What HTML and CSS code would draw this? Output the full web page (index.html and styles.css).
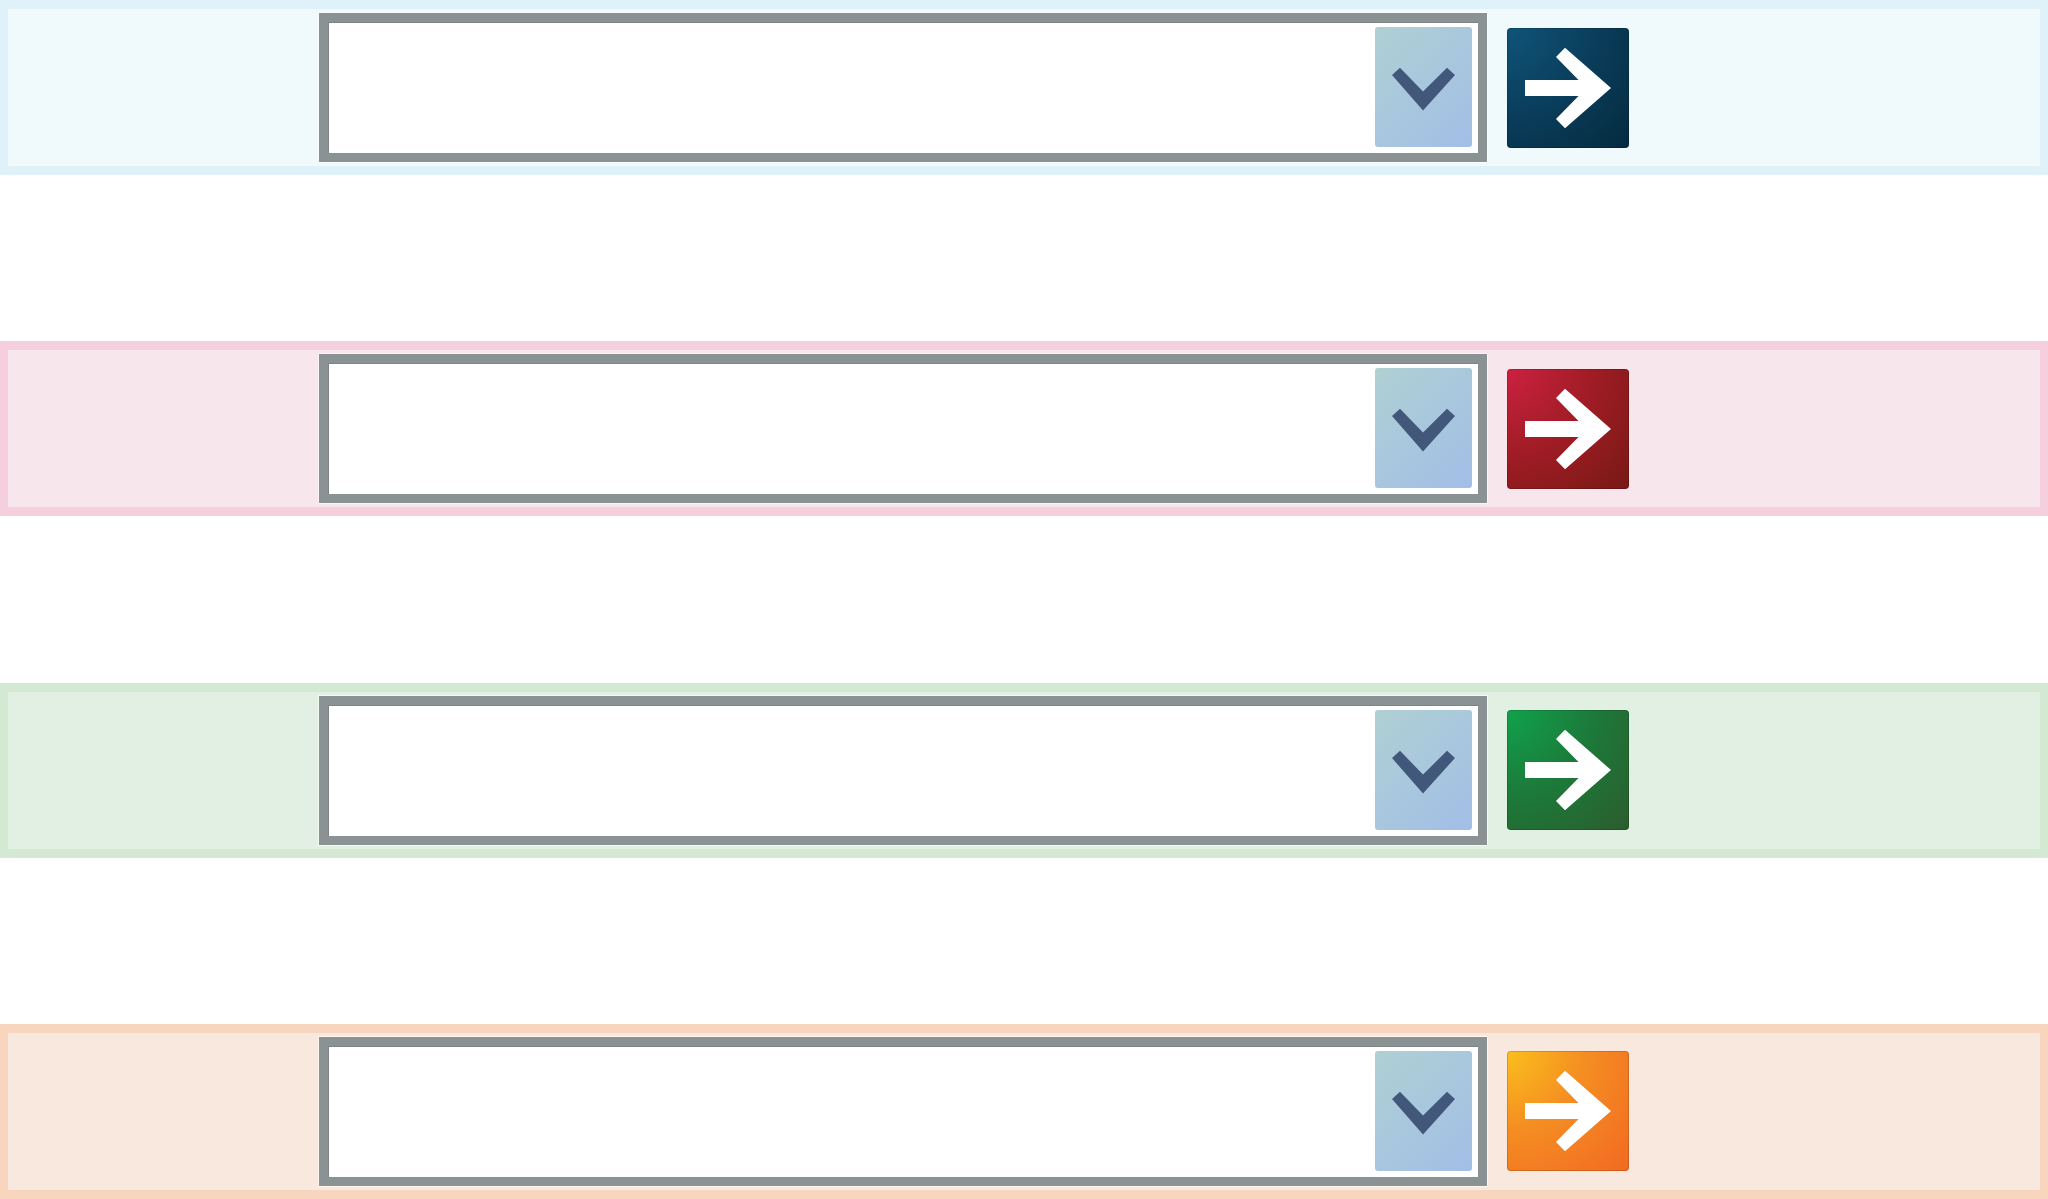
FILE: index.html
```html
<!DOCTYPE html>
<html lang="en">
<head>
    <meta charset="UTF-8">
    <title>Selectors</title>
    <link rel="stylesheet" href="styles.css">
</head>
<body>
    <div class="row row-blue">
        <div class="select">
            <div class="select-btn">
                <svg viewBox="0 0 97 120" width="97" height="120"><polygon points="17,48 25,40.8 48,64.5 72,40.8 80,48 48,83.5"/></svg>
            </div>
        </div>
        <div class="go-btn">
            <svg viewBox="0 0 122 120" width="122" height="120"><polygon points="18,52 71.5,52 49,29 58,19.7 104,60 58,100.3 49,91 71.5,68 18,68"/></svg>
        </div>
    </div>

    <div class="row row-red">
        <div class="select">
            <div class="select-btn">
                <svg viewBox="0 0 97 120" width="97" height="120"><polygon points="17,48 25,40.8 48,64.5 72,40.8 80,48 48,83.5"/></svg>
            </div>
        </div>
        <div class="go-btn">
            <svg viewBox="0 0 122 120" width="122" height="120"><polygon points="18,52 71.5,52 49,29 58,19.7 104,60 58,100.3 49,91 71.5,68 18,68"/></svg>
        </div>
    </div>

    <div class="row row-green">
        <div class="select">
            <div class="select-btn">
                <svg viewBox="0 0 97 120" width="97" height="120"><polygon points="17,48 25,40.8 48,64.5 72,40.8 80,48 48,83.5"/></svg>
            </div>
        </div>
        <div class="go-btn">
            <svg viewBox="0 0 122 120" width="122" height="120"><polygon points="18,52 71.5,52 49,29 58,19.7 104,60 58,100.3 49,91 71.5,68 18,68"/></svg>
        </div>
    </div>

    <div class="row row-orange">
        <div class="select">
            <div class="select-btn">
                <svg viewBox="0 0 97 120" width="97" height="120"><polygon points="17,48 25,40.8 48,64.5 72,40.8 80,48 48,83.5"/></svg>
            </div>
        </div>
        <div class="go-btn">
            <svg viewBox="0 0 122 120" width="122" height="120"><polygon points="18,52 71.5,52 49,29 58,19.7 104,60 58,100.3 49,91 71.5,68 18,68"/></svg>
        </div>
    </div>
</body>
</html>
```

FILE: styles.css
```css
body {
    margin: 0;
    padding: 0;
    background-color: #fff;
    font-family: "Liberation Sans", Arial, sans-serif;
}

.row {
    box-sizing: border-box;
    height: 175px;
    margin-bottom: 166.33px;
    border-style: solid;
    border-width: 9px 8px;
    padding-left: 311px;
    display: flex;
    align-items: center;
    gap: 20px;
}

.row:last-child {
    margin-bottom: 0;
}

.row-blue {
    border-color: #dff1f9;
    background-color: #f0f9fc;
}

.row-red {
    border-color: #f6cfdf;
    background-color: #f8e6ed;
}

.row-green {
    border-color: #d3e9d2;
    background-color: #e1f0e2;
}

.row-orange {
    border-color: #f7d5bf;
    background-color: #f9e8dd;
}

/* Campo de seleção */
.select {
    box-sizing: border-box;
    width: 1168px;
    height: 149px;
    border: 9px solid #8b9293;
    background-color: #fff;
    box-shadow: 0 0 0 1px rgba(255, 255, 255, 0.6), inset 1px 1px 0 #7d8485;
    padding: 5px 6px 6px 0;
    display: flex;
    justify-content: flex-end;
}

.select-btn {
    width: 97px;
    height: 120px;
    border-radius: 3px;
    background: linear-gradient(135deg, #b0d0d3 0%, #a8c6de 55%, #a2bee7 100%);
}

.select-btn svg {
    display: block;
    fill: #42587a;
}

/* Botão de avançar */
.go-btn {
    width: 122px;
    height: 120px;
    border-radius: 4px;
    box-shadow: inset 0 0 0 1px rgba(0, 0, 0, 0.15);
}

.go-btn svg {
    display: block;
    fill: #fff;
}

.row-blue .go-btn {
    background: radial-gradient(circle at 0 0, #0f5479 0%, #0a3e5c 50%, #052a3e 100%);
}

.row-red .go-btn {
    background: radial-gradient(circle at 0 0, #cc2140 0%, #a01c25 50%, #771915 100%);
}

.row-green .go-btn {
    background: radial-gradient(circle at 0 0, #10a24c 0%, #1c7a3a 50%, #2b5c2d 100%);
}

.row-orange .go-btn {
    background: radial-gradient(circle at 0 0, #fbbf1c 0%, #f58e22 45%, #f26922 100%);
}
```
